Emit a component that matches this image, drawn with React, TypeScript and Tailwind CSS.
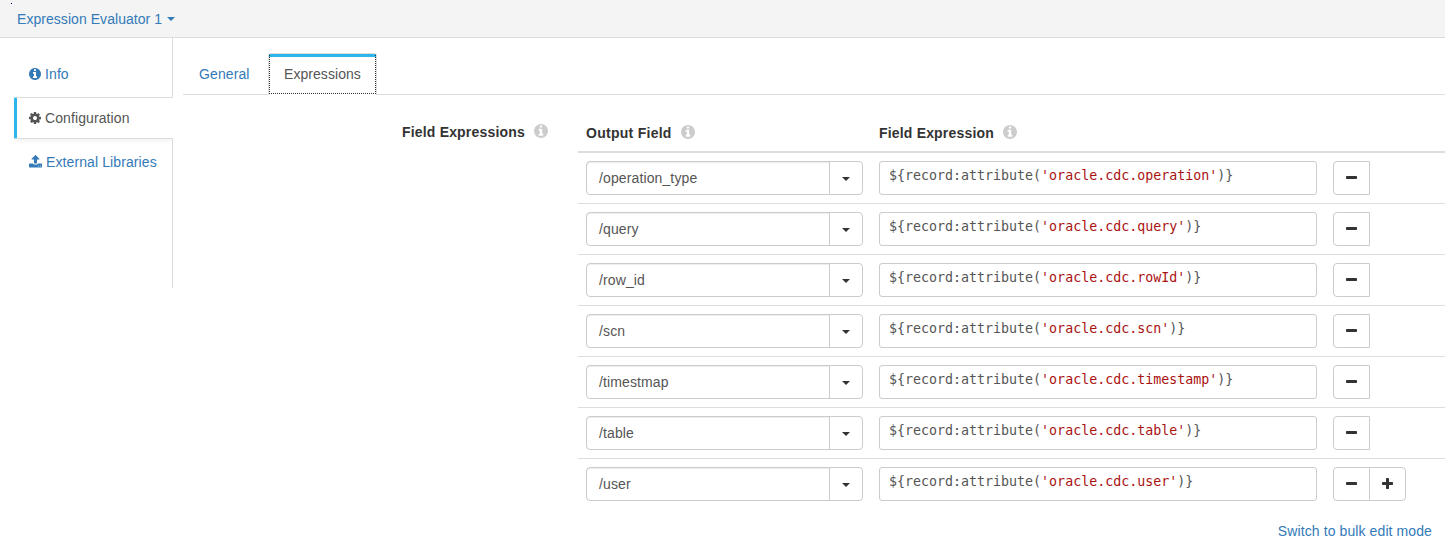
import React from "react";

const INFO =
  "M1152 1376v-160q0-14-9-23t-23-9h-96v-512q0-14-9-23t-23-9h-320q-14 0-23 9t-9 23v160q0 14 9 23t23 9h96v320h-96q-14 0-23 9t-9 23v160q0 14 9 23t23 9h448q14 0 23-9t9-23zM1024 480v-160q0-14-9-23t-23-9h-192q-14 0-23 9t-9 23v160q0 14 9 23t23 9h192q14 0 23-9t9-23zM1664 896q0 209-103 385.5t-279.5 279.5-385.5 103-385.5-103-279.5-279.5-103-385.5 103-385.5 279.5-279.5 385.5-103 385.5 103 279.5 279.5 103 385.5z";
const COG =
  "M1152 896q0-106-75-181t-181-75-181 75-75 181 75 181 181 75 181-75 75-181zm512-109v222q0 12-8 23t-20 13l-185 28q-19 54-39 91 35 50 107 138 10 12 10 25t-9 23q-27 37-99 108t-94 71q-12 0-26-9l-138-108q-44 23-91 38-16 136-29 186-7 28-36 28h-222q-14 0-24.5-8.5t-11.5-21.5l-28-184q-49-16-90-37l-141 107q-10 9-25 9-14 0-25-11-126-114-165-168-7-10-7-23 0-12 8-23 15-21 51-66.5t54-70.5q-27-50-41-99l-183-27q-13-2-21-12.5t-8-23.5v-222q0-12 8-23t19-13l186-28q14-46 39-92-40-57-107-138-10-12-10-24 0-10 9-23 26-36 98.5-107.5t94.5-71.5q13 0 26 10l138 107q44-23 91-38 16-136 29-186 7-28 36-28h222q14 0 24.5 8.5t11.5 21.5l28 184q49 16 90 37l142-107q9-9 24-9 13 0 25 10 129 119 165 170 7 8 7 22 0 12-8 23-15 21-51 66.5t-54 70.5q26 50 41 98l183 28q13 2 21 12.5t8 23.5z";
const UPLOAD =
  "M1344 1472q0-26-19-45t-45-19-45 19-19 45 19 45 45 19 45-19 19-45zm256 0q0-26-19-45t-45-19-45 19-19 45 19 45 45 19 45-19 19-45zm128-224v320q0 40-28 68t-68 28h-1472q-40 0-68-28t-28-68v-320q0-40 28-68t68-28h427q21 56 70.5 92t110.5 36h256q61 0 110.5-36t70.5-92h427q40 0 68 28t28 68zm-325-648q-17 40-59 40h-256v448q0 26-19 45t-45 19h-256q-26 0-45-19t-19-45v-448h-256q-42 0-59-40-17-39 14-69l448-448q18-19 45-19t45 19l448 448q31 30 14 69z";

function Info({ className }: { className: string }) {
  return (
    <svg className={className} viewBox="128 128 1536 1536" fill="currentColor">
      <path d={INFO} />
    </svg>
  );
}

function Caret() {
  return (
    <svg className="h-1 w-2 shrink-0" viewBox="0 0 8 4" fill="currentColor">
      <path d="M0 0h8L4 4z" />
    </svg>
  );
}

const rows = [
  { field: "/operation_type", attr: "operation" },
  { field: "/query", attr: "query" },
  { field: "/row_id", attr: "rowId" },
  { field: "/scn", attr: "scn" },
  { field: "/timestmap", attr: "timestamp" },
  { field: "/table", attr: "table" },
  { field: "/user", attr: "user" },
];

function Row({ field, attr, first, last }: { field: string; attr: string; first: boolean; last: boolean }) {
  return (
    <div className={first ? "flex px-2 py-2" : "flex border-t border-[#ddd] px-2 py-2"}>
      <div className="flex h-[34px] w-[277px] shrink-0 rounded border border-[#ccc]">
        <div className="flex w-[243px] items-center rounded-l-[3px] border-r border-[#ccc] pl-3 tracking-[0.12px] text-[#555] shadow-[inset_0_1px_1px_rgba(0,0,0,0.075)]">
          {field}
        </div>
        <button className="flex flex-1 items-center justify-center pt-[2px] text-[#333]">
          <Caret />
        </button>
      </div>
      <div className="ml-4 h-[34px] w-[438px] shrink-0 whitespace-pre rounded-[3px] border border-[#ccc] pl-[9px] pt-[4px] font-['DejaVu_Sans_Mono',monospace] text-[13.3px] leading-5 tracking-[0px] text-[#555]">
        {"${record:attribute("}
        <span className="text-[#a11]">{`'oracle.cdc.${attr}'`}</span>
        {")}"}
      </div>
      <div className="ml-4 flex text-[#333]">
        <button className="flex h-[34px] w-[37px] items-center justify-center rounded-l border border-[#ccc] pb-px">
          <svg className="h-[11px] w-[11px]" viewBox="0 0 11 11" fill="currentColor">
            <rect y="4" width="11" height="3" rx="0.7" />
          </svg>
        </button>
        {last && (
          <button className="-ml-px flex h-[34px] w-[37px] items-center justify-center rounded-r border border-[#ccc] pb-px">
            <svg className="h-[11px] w-[11px]" viewBox="0 0 11 11" fill="currentColor">
              <rect y="4" width="11" height="3" rx="0.7" />
              <rect x="4" width="3" height="11" rx="0.7" />
            </svg>
          </button>
        )}
      </div>
    </div>
  );
}

export default function App() {
  return (
    <div className="relative h-[554px] w-[1445px] overflow-hidden bg-white font-['Liberation_Sans',Arial,sans-serif] text-sm leading-5 tracking-[0.1px] text-[#333]">
      <span className="absolute left-[11px] top-[3px] h-px w-px bg-[#00006a]" />
      <header className="flex h-[38px] items-center gap-[5px] border-b border-[#ddd] bg-[#f4f4f4] pl-[17px] text-[#337ab7]">
        <span className="tracking-[0.05px]">Expression Evaluator 1</span>
        <Caret />
      </header>
      <div className="flex">
        <nav className="flex h-[250px] w-[173px] shrink-0 flex-col pl-[14px] text-[#337ab7]">
          <div className="flex h-[59px] items-center gap-1 border-r border-[#ddd] pl-[15px] pt-[13px]">
            <Info className="h-3 w-3" />
            <span>Info</span>
          </div>
          <div className="flex h-[42px] items-center gap-1 rounded-l-[2px] border-y border-l-[3px] border-y-[#ddd] border-l-[#2cb5e8] pl-3 text-[#555] shadow-[0_2px_4px_rgba(0,0,0,0.06)] [clip-path:inset(-6px_0_-8px_-6px)]">
            <svg className="h-3 w-3" viewBox="128 128 1536 1536" fill="currentColor">
              <path d={COG} />
            </svg>
            <span>Configuration</span>
          </div>
          <div className="flex flex-1 items-start gap-1 border-r border-[#ddd] pl-[15px] pt-[13px]">
            <svg className="mt-[3px] h-[13px] w-[13px]" viewBox="64 64 1664 1664" fill="currentColor">
              <path d={UPLOAD} />
            </svg>
            <span>External Libraries</span>
          </div>
        </nav>
        <main className="ml-[10px] flex-1">
          <div className="flex h-[57px] items-end border-b border-[#ddd]">
            <div className="h-[41px] w-[85px] pl-4 pt-[11px] text-[#337ab7]">General</div>
            <div className="-mb-px flex h-[42px] w-[109px] flex-col rounded-t-[3px] border border-b-0 border-[#ddd] bg-white">
              <div className="relative flex flex-1 border-t-[3px] border-[#2cb5e8] pl-[15px] pt-[7px] tracking-[0.06px] text-[#555]">
                Expressions
                <svg className="absolute -top-[3px] left-0 h-[40px] w-[107px]" viewBox="0 0 107 40" fill="none" stroke="#333" strokeDasharray="1 1">
                  <path d="M.5 1v39M106.5 1v39M0 39.5h107" />
                </svg>
              </div>
            </div>
          </div>
          <div className="flex">
            <div className="flex w-[395px] shrink-0 items-start pl-[219px] pt-[27px] font-bold tracking-[0.18px]">
              <span>Field Expressions</span>
              <Info className="ml-[9px] mt-[2px] h-[14px] w-[14px] text-[#ccc]" />
            </div>
            <section className="flex-1">
              <div className="flex h-[58px] border-b-2 border-[#ddd] pl-2 pt-7 font-bold">
                <div className="flex w-[293px] tracking-[0.27px]">
                  <span>Output Field</span>
                  <Info className="ml-[9px] mt-[2px] h-[14px] w-[14px] text-[#ccc]" />
                </div>
                <div className="flex tracking-[0.18px]">
                  <span>Field Expression</span>
                  <Info className="ml-[9px] mt-[2px] h-[14px] w-[14px] text-[#ccc]" />
                </div>
              </div>
              {rows.map((r, i) => (
                <Row key={r.attr} {...r} first={i === 0} last={i === rows.length - 1} />
              ))}
              <div className="flex justify-end pr-[13px] pt-3 text-[#337ab7]">Switch to bulk edit mode</div>
            </section>
          </div>
        </main>
      </div>
    </div>
  );
}
